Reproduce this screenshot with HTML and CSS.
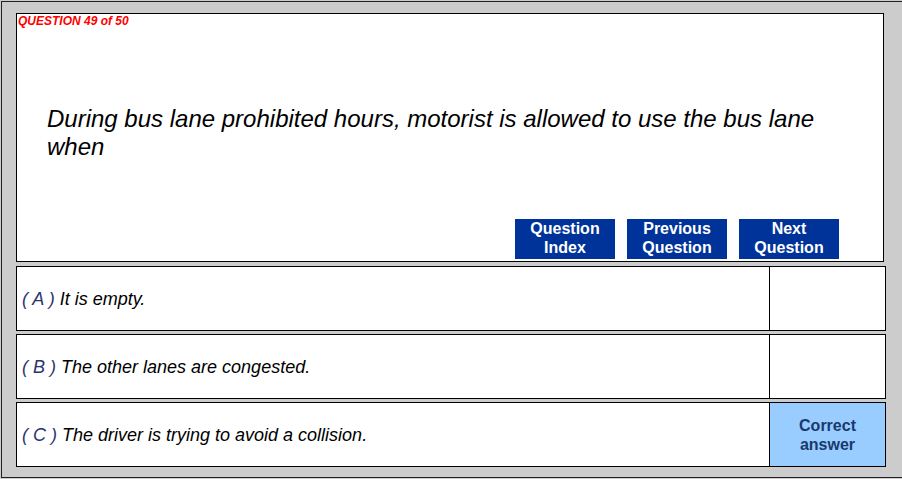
FILE: index.html
```html
<!DOCTYPE html>
<html lang="en">
<head>
  <meta charset="UTF-8">
  <title>Question 49 of 50</title>
  <link rel="stylesheet" href="styles.css">
</head>
<body>
  <div class="frame">
    <div class="question-box">
      <div class="q-count">QUESTION 49 of 50</div>
      <div class="q-text">During bus lane prohibited hours, motorist is allowed to use the bus lane when</div>
      <div class="nav">
        <button class="nav-btn">Question<br>Index</button>
        <button class="nav-btn">Previous<br>Question</button>
        <button class="nav-btn">Next<br>Question</button>
      </div>
    </div>
    <div class="answers">
      <div class="answer">
        <div class="answer-text"><span class="label">( A )</span> It is empty.</div>
        <div class="answer-mark"></div>
      </div>
      <div class="answer">
        <div class="answer-text"><span class="label">( B )</span> The other lanes are congested.</div>
        <div class="answer-mark"></div>
      </div>
      <div class="answer">
        <div class="answer-text"><span class="label">( C )</span> The driver is trying to avoid a collision.</div>
        <div class="answer-mark correct">Correct<br>answer</div>
      </div>
    </div>
  </div>
</body>
</html>
```

FILE: styles.css
```css
* { box-sizing: border-box; }
html, body { margin: 0; height: 100%; overflow: hidden; }
body { background: #ccc; font-family: "Liberation Sans", Arial, sans-serif; color: #000; }

.frame { margin: 1px 0 0 1px; height: 477px; border: 1px solid #222; border-right: none; padding: 11px 0 10px 14px; }

.question-box { width: 868px; height: 249px; background: #fff; border: 1px solid #000; display: flex; flex-direction: column; }
.q-count { padding-left: 1px; font-size: 12px; line-height: 14px; font-weight: bold; font-style: italic; color: #f00; }
.q-text { margin-top: 77px; padding: 0 30px; font-size: 24px; line-height: 28px; font-style: italic; }
.nav { margin-top: auto; display: flex; justify-content: flex-end; gap: 12px; padding: 0 44px 2px 0; }
.nav-btn { width: 100px; height: 40px; padding: 0; border: none; background: #003399; color: #fff; font-family: inherit; font-size: 16px; line-height: 19px; font-weight: bold; display: flex; align-items: flex-start; justify-content: center; }

.answers { margin-top: 4px; width: 870px; display: flex; flex-direction: column; gap: 3px; }
.answer { height: 65px; display: flex; background: #fff; border: 1px solid #000; }
.answer-text { flex: 1; display: flex; align-items: center; padding: 1px 0 0 5px; font-size: 18px; font-style: italic; white-space: pre; }
.label { color: #2a3470; }
.answer-mark { width: 116px; border-left: 1px solid #000; display: flex; align-items: center; justify-content: center; text-align: center; font-size: 16px; line-height: 19px; font-weight: bold; color: #1a3a6e; }
.correct { background: #99ccff; }
```
